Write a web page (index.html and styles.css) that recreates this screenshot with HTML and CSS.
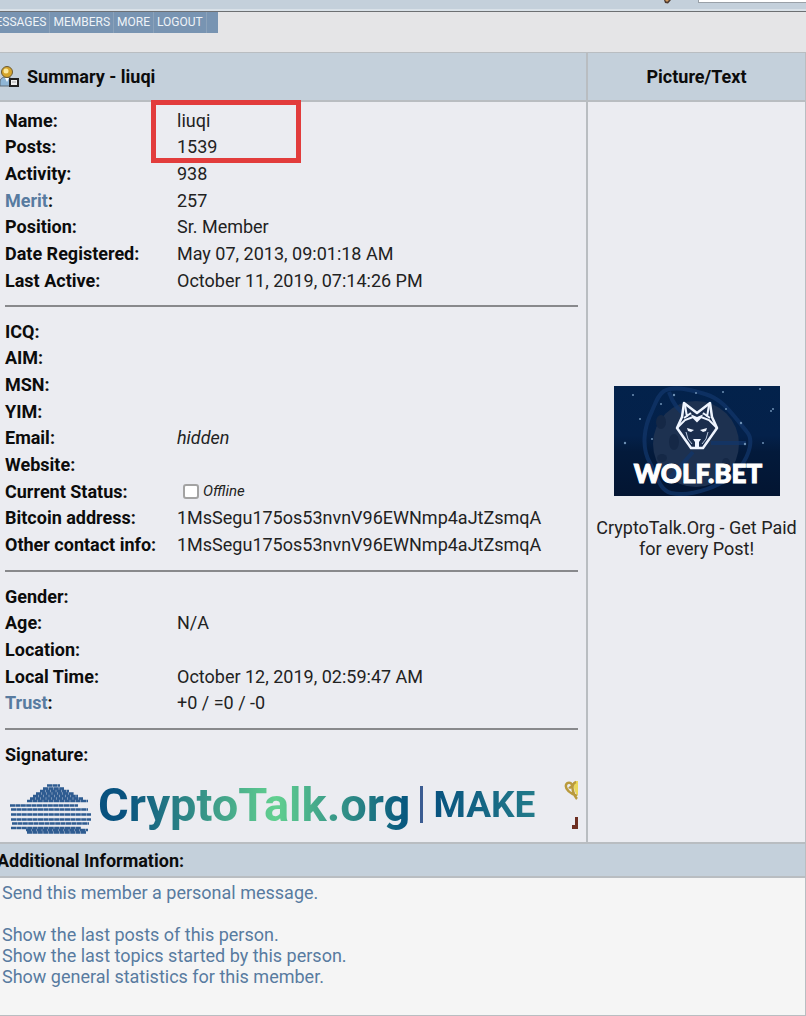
FILE: index.html
```html
<!DOCTYPE html>
<html lang="en">
<head>
  <meta charset="UTF-8">
  <meta name="viewport" content="width=device-width, initial-scale=1.0">
  <title>Summary - liuqi</title>
  <link rel="stylesheet" href="styles.css">
</head>
<body>

<header class="topbar">
  <svg class="pencil" width="14" height="4" viewBox="0 0 14 4">
    <path d="M0 0h7l-3 3.500-3-.5z" fill="#4d3a30"/>
    <path d="M1 0h4l-2 2z" fill="#d29a5e"/>
  </svg>
  <div class="search-edge"></div>
</header>

<nav class="menu">
  <a href="#">Messages</a>
  <a href="#">Members</a>
  <a href="#">More</a>
  <a href="#">Logout</a>
</nav>

<main class="profile">
  <div class="head head-summary">
    <svg class="user-icon" width="19" height="22" viewBox="0 0 19 22">
      <path d="M0 20v-4c0-3 2-5 6-5s7 2 7 5v4z" fill="#8fb6d6" stroke="#5f6c78"/>
      <path d="M5 12l2 4 2-4z" fill="#fff"/>
      <circle cx="7" cy="6" r="5.500" fill="#d5a52c" stroke="#6b5a34"/>
      <circle cx="6" cy="5" r="2.500" fill="#fbe9a0"/>
      <rect x="10" y="13" width="8" height="7" fill="#f1f1f1" stroke="#222" stroke-width="2"/>
      <path d="M12 16h4" stroke="#aaa"/>
    </svg>
    Summary - liuqi
  </div>
  <div class="head head-picture">Picture/Text</div>

  <section class="details">
    <div class="highlight"></div>
    <table class="info">
      <tr><th>Name:</th><td>liuqi</td></tr>
      <tr><th>Posts:</th><td>1539</td></tr>
      <tr><th>Activity:</th><td>938</td></tr>
      <tr><th><a href="#">Merit</a>:</th><td>257</td></tr>
      <tr><th>Position:</th><td>Sr. Member</td></tr>
      <tr><th>Date Registered:</th><td>May 07, 2013, 09:01:18 AM</td></tr>
      <tr><th>Last Active:</th><td>October 11, 2019, 07:14:26 PM</td></tr>
    </table>
    <hr>
    <table class="info">
      <tr><th>ICQ:</th><td></td></tr>
      <tr><th>AIM:</th><td></td></tr>
      <tr><th>MSN:</th><td></td></tr>
      <tr><th>YIM:</th><td></td></tr>
      <tr><th>Email:</th><td><i>hidden</i></td></tr>
      <tr><th>Website:</th><td></td></tr>
      <tr><th>Current Status:</th><td><label class="status"><input type="checkbox"><i>Offline</i></label></td></tr>
      <tr><th>Bitcoin address:</th><td>1MsSegu175os53nvnV96EWNmp4aJtZsmqA</td></tr>
      <tr><th>Other contact info:</th><td>1MsSegu175os53nvnV96EWNmp4aJtZsmqA</td></tr>
    </table>
    <hr>
    <table class="info">
      <tr><th>Gender:</th><td></td></tr>
      <tr><th>Age:</th><td>N/A</td></tr>
      <tr><th>Location:</th><td></td></tr>
      <tr><th>Local Time:</th><td>October 12, 2019, 02:59:47 AM</td></tr>
      <tr><th><a href="#">Trust</a>:</th><td>+0 / =0 / -0</td></tr>
    </table>
    <hr>
    <table class="info">
      <tr><th>Signature:</th><td></td></tr>
    </table>

    <div class="signature">
      <svg class="building" width="82" height="50" viewBox="0 0 82 50" stroke="#2f5c91" stroke-width="2.500" stroke-dasharray="5 .4">
        <path d="M38 1.500h13M34 4.500h21M31 7h29M27 9.500h38M24 12h45M21 14.500h53M18 17h61"/>
        <path d="M1 21.500h68M2 25.500h77M2 30.500h80M2 35.500h80M3 39.500h77M2 44h70"/>
        <path d="M17 46h62M18 48.500h59"/>
      </svg>
      <span class="brand">CryptoTalk.org</span>
      <span class="bar"></span>
      <span class="make">MAKE</span>
      <svg class="trophy" width="14" height="50" viewBox="0 0 14 50">
        <path d="M14 1h-3c-2 6-1 11 3 15z" fill="#ead85a"/>
        <path d="M13 16C6 13 1 9 2 5c1-3 5-3 6 0 0 2-2 3-3 2M12 2C9 3 8 7 9 11c1 4 2 6 4 8" fill="none" stroke="#b99a3c" stroke-width="2.500"/>
        <path d="M8 45h3v-8h3v12H8z" fill="#6d2f22"/>
      </svg>
    </div>
  </section>

  <aside class="picture">
    <svg class="wolf" width="166" height="110" viewBox="0 0 166 110">
      <defs>
        <linearGradient id="sky" x1="0" y1="0" x2="0" y2="1">
          <stop offset="0" stop-color="#03224b"/>
          <stop offset=".45" stop-color="#04214a"/>
          <stop offset=".6" stop-color="#031a3b"/>
          <stop offset="1" stop-color="#031532"/>
        </linearGradient>
      </defs>
      <rect width="166" height="110" fill="url(#sky)"/>
      <circle cx="82" cy="58" r="43" fill="#1d3150"/>
      <path d="M50 5C59 0 72 2 91 8c18 5 27 20 42 38 7 8 2 23-6 34-15 21-51 31-70 27-12-3-14-18-21-30-9-16-6-36 2-52 4-9 6-16 12-20zM97 57h35M79 66L52 96M55 6c4 12 11 20 18 24" fill="none" stroke="#12366a" stroke-width="4" opacity=".75"/>
      <g fill="#152846">
        <ellipse cx="60" cy="56" rx="5" ry="8"/>
        <ellipse cx="47" cy="36" rx="5" ry="7"/>
        <ellipse cx="112" cy="77" rx="4" ry="5"/>
        <ellipse cx="48" cy="72" rx="5" ry="4"/>
      </g>
      <g fill="#6e91b5">
        <circle cx="19" cy="9" r="1"/><circle cx="60" cy="9" r="1.200"/><circle cx="82" cy="7" r="1"/>
        <circle cx="109" cy="6" r="1"/><circle cx="146" cy="3" r="1"/><circle cx="47" cy="18" r="1"/>
        <circle cx="26" cy="33" r="1"/><circle cx="112" cy="23" r="1"/><circle cx="127" cy="37" r="1.200"/>
        <circle cx="11" cy="57" r="1.200"/><circle cx="38" cy="53" r="1"/><circle cx="131" cy="58" r="1.200"/>
        <circle cx="149" cy="57" r="1"/><circle cx="157" cy="25" r="1"/><circle cx="159" cy="23" r="1"/>
      </g>
      <!-- wolf head -->
      <path d="M70 17l13 11 13-11 3 16 4 9-14 20H77L63 42l4-10z" fill="#1a2d4d"/>
      <path d="M70 17l13 10 13-10 2 14 5 11-14 20H77L63 42l5-11z" fill="none" stroke="#eff5ff" stroke-width="2.500" stroke-linejoin="round"/>
      <path d="M63 42l8-8 8-3 4 4 4-4 8 3 8 8M71 19l2 12M95 19l-2 12M70 32l7-5M96 32l-7-5" fill="none" stroke="#eff5ff" stroke-width="2"/>
      <path d="M76 28l7 3 7-3-7 7zM73 42l7 2-3 2-3-1zM93 42l-7 2 3 2 3-1zM79 53h8l-2 3v5h-4v-5z" fill="#eff5ff"/>
      <path d="M72 46l2 7 4 5M94 46l-2 7-4 5" fill="none" stroke="#b9c8de"/>
      <text class="wolf-name" x="84" y="97" text-anchor="middle">WOLF.BET</text>
    </svg>
    <p>CryptoTalk.Org - Get Paid for every Post!</p>
  </aside>

  <div class="head head-additional">Additional Information:</div>
  <section class="additional">
    <a href="#">Send this member a personal message.</a>
    <br>
    <a href="#">Show the last posts of this person.</a>
    <a href="#">Show the last topics started by this person.</a>
    <a href="#">Show general statistics for this member.</a>
  </section>
</main>

</body>
</html>
```
FILE: styles.css
```css
/* Reset */
* {
  margin: 0;
  padding: 0;
  box-sizing: border-box;
}

body {
  font-family: Roboto, sans-serif;
  font-size: 18px;
  line-height: 21px;
  color: #222;
  background-color: #e5e5e7;
  overflow-x: hidden;
}

a {
  color: #587ba0;
  text-decoration: none;
}

/* Top bar */
.topbar {
  display: flex;
  justify-content: flex-end;
  gap: 20px;
  height: 12px;
  background-color: #c4d0db;
  border-bottom: 1px solid #6d7073;
  box-shadow: inset 0 -2px #d9e1e8;
}

.search-edge {
  width: 108px;
  height: 3px;
  background-color: #fff;
  border: solid #9aa1a8;
  border-width: 0 0 1px 1px;
}

/* Menu */
.menu {
  display: flex;
  width: max-content;
  height: 21px;
  margin-left: -18px;
  padding-right: 11px;
  background-color: #7894b2;
}

.menu a {
  padding: 0 3px;
  border-right: 1px solid #8ba2ba;
  color: #eef3f8;
  font-size: 12px;
  text-transform: uppercase;
}

/* Profile grid */
.profile {
  display: grid;
  grid-template-columns: 1fr 217px;
  gap: 2px;
  margin-top: 19px;
  border: solid #b9bdc1;
  border-width: 1px 1px 1px 0;
  background-color: #b9bdc1;
}

.head {
  display: flex;
  align-items: center;
  height: 47px;
  background-color: #c4d0db;
  color: #0c0c0c;
  font-weight: bold;
}

.head-summary {
  gap: 8px;
}

.head-picture {
  justify-content: center;
}

.head-additional {
  grid-column: 1 / -1;
  height: 32px;
  text-indent: -3px;
}

/* Details */
.details {
  position: relative;
  padding: 5px 8px 0 5px;
  background-color: #ebecf1;
}

.highlight {
  position: absolute;
  top: -2px;
  left: 151px;
  width: 150px;
  height: 63px;
  border: 5px solid #e23c3c;
}

.info {
  width: 100%;
  border-collapse: collapse;
}

.info tr {
  height: 27px;
}

.info tr:nth-child(3n + 1) {
  height: 26px;
}

.info th {
  width: 172px;
  color: #0c0c0c;
  text-align: left;
}

hr {
  margin: 12px 0 11px;
  border: 0;
  border-top: 2px solid #88898c;
}

.status {
  display: flex;
  align-items: center;
  gap: 4px;
  padding-left: 6px;
  font-size: 15px;
}

.status input {
  appearance: none;
  width: 16px;
  height: 15px;
  border: 2px solid #a3a3a3;
  border-radius: 3px;
  background-color: #fff;
}

/* Signature */
.signature {
  display: flex;
  align-items: center;
  height: 75px;
  overflow: hidden;
  font-weight: bold;
}

.building {
  margin: 8px 7px 0 4px;
}

.brand,
.make {
  color: transparent;
  background-clip: text;
  line-height: 60px;
}

.brand {
  font-size: 47px;
  background-image: linear-gradient(90deg, #08527f 8%, #62d090 57%, #08597f 98%);
}

.bar {
  width: 3px;
  height: 37px;
  margin: 0 10px;
  background-color: #3b5c92;
}

.make {
  font-size: 37px;
  background-image: linear-gradient(90deg, #08527f, #237b8a);
}

.trophy {
  margin-left: auto;
}

/* Picture */
.picture {
  display: flex;
  flex-direction: column;
  align-items: center;
  justify-content: center;
  gap: 21px;
  background-color: #ebecf1;
  text-align: center;
}

.wolf-name {
  font-family: Lato, sans-serif;
  font-size: 26px;
  font-weight: 900;
  fill: #fff;
  stroke: #fff;
  stroke-width: 1px;
}

/* Additional information */
.additional {
  display: flex;
  flex-direction: column;
  grid-column: 1 / -1;
  padding: 4px 2px 28px;
  background-color: #f5f5f5;
}
```
